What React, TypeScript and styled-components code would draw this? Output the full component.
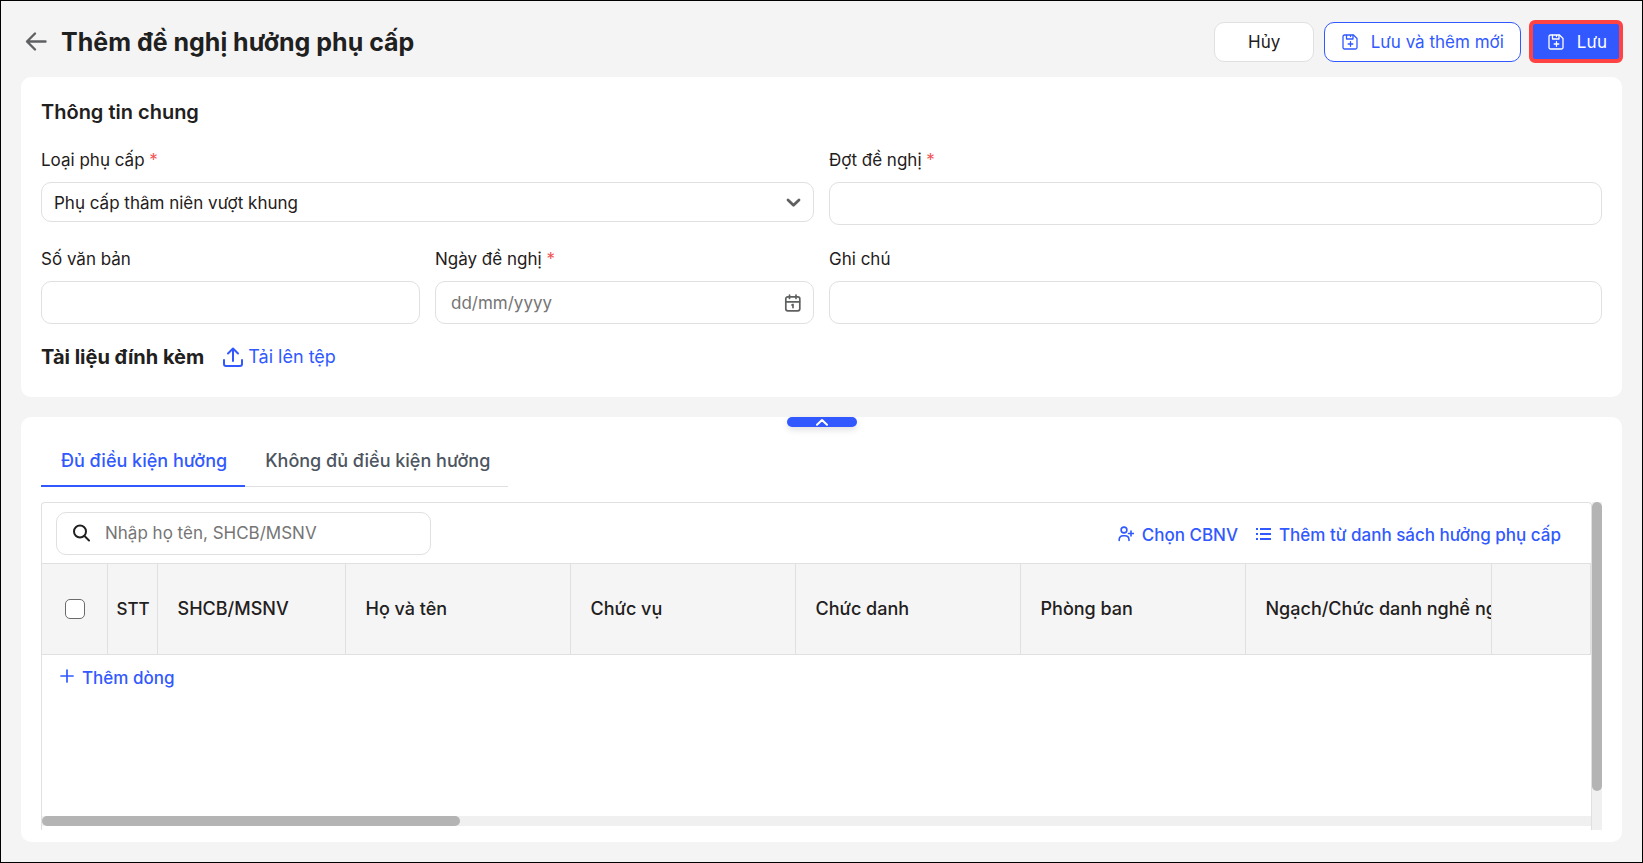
import React from 'react';
import styled, { createGlobalStyle } from 'styled-components';

const color = {
  text: '#1f2020',
  blue: '#3159ff',
  line: '#e0e0e0',
  page: '#f4f4f4',
  icon: '#5f6061',
  muted: '#757575',
  danger: '#f25555',
};

const GlobalStyle = createGlobalStyle`
  *, *::before, *::after { box-sizing: border-box; }
  body { margin: 0; background: ${color.page}; }
  body, button, input, select, table {
    font-family: Inter, "Noto Sans", sans-serif;
    font-size: 17px;
    line-height: 24px;
    color: ${color.text};
  }
  h1, h2 { margin: 0; }
`;

const Page = styled.div`
  display: flex;
  flex-direction: column;
  min-height: 100vh;
  padding: 19px 20px 20px;
  border: 1px solid #000;
  background: ${color.page};
`;

const Header = styled.header`
  display: flex;
  align-items: center;
  height: 43px;
  margin: 0 -1px 14px 0;
`;

const BackButton = styled.button`
  display: flex;
  padding: 0;
  margin: 0 14px 0 4px;
  border: 0;
  background: none;
  color: ${color.icon};
`;

const Title = styled.h1`
  flex: 1;
  font-size: 25px;
  line-height: 32px;
  font-weight: 700;
`;

const Actions = styled.div`
  display: flex;
  align-items: center;
  gap: 10px;
`;

const Button = styled.button<{ $variant: 'plain' | 'outline' }>`
  display: flex;
  align-items: center;
  justify-content: center;
  gap: 13px;
  min-width: 100px;
  height: 40px;
  padding: 0 16px 0 17px;
  border: 1px solid ${(p) => (p.$variant === 'outline' ? color.blue : color.line)};
  border-radius: 10px;
  background: #fff;
  color: ${(p) => (p.$variant === 'outline' ? color.blue : color.text)};
`;

const SaveButton = styled.button`
  display: flex;
  align-items: center;
  gap: 13px;
  height: 43px;
  margin-left: -2px;
  padding: 0 12px 0 15px;
  border: 4px solid #ff4242;
  border-radius: 6px;
  background: ${color.blue};
  color: #fff;
`;

const Card = styled.section`
  padding: 20px;
  border-radius: 10px;
  background: #fff;
`;

const InfoCard = styled(Card)`
  padding: 19px 20px 24px;
  margin-bottom: 20px;
`;

const SectionTitle = styled.h2`
  font-size: 20px;
  line-height: 32px;
  font-weight: 600;
`;

const FieldGrid = styled.div`
  display: grid;
  grid-template-columns: repeat(4, 1fr);
  column-gap: 15px;
  row-gap: 22px;
  margin-top: 20px;
`;

const Field = styled.div<{ $span?: number }>`
  display: flex;
  flex-direction: column;
  gap: 9px;
  grid-column: span ${(p) => p.$span ?? 1};
`;

const Label = styled.label`
  line-height: 25px;
`;

const Required = styled.span`
  color: ${color.danger};
`;

const TextInput = styled.input`
  display: block;
  width: 100%;
  height: 43px;
  padding: 0 15px;
  border: 1px solid ${color.line};
  border-radius: 10px;
  background: #fff;
  outline: 0;
  &::placeholder { color: ${color.muted}; opacity: 1; }
`;

const Control = styled.div`
  position: relative;
`;

const Select = styled.select`
  display: block;
  appearance: none;
  width: 100%;
  height: 40px;
  padding: 1px 40px 0 12px;
  border: 1px solid ${color.line};
  border-radius: 10px;
  background: #fff;
`;

const TrailingIcon = styled.span`
  position: absolute;
  top: 0;
  bottom: 0;
  right: 12px;
  display: flex;
  align-items: center;
  color: ${color.icon};
  pointer-events: none;
`;

const LeadingIcon = styled(TrailingIcon)`
  right: auto;
  left: 16px;
  color: ${color.text};
`;

const Attachments = styled.div`
  display: flex;
  align-items: center;
  gap: 19px;
  margin-top: 17px;
`;

const AttachTitle = styled(SectionTitle)`
  font-weight: 700;
`;

const LinkButton = styled.button`
  display: inline-flex;
  align-items: center;
  gap: 8px;
  padding: 0;
  border: 0;
  background: none;
  color: ${color.blue};
  font-weight: 500;
`;

const UploadButton = styled(LinkButton)`
  gap: 5px;
  font-size: 18px;
  font-weight: 400;
`;

const ListCard = styled(Card)`
  display: flex;
  flex: 1;
  flex-direction: column;
  position: relative;
  padding: 20px 20px 12px;
`;

const CollapseHandle = styled.button`
  position: absolute;
  top: 0;
  left: 50%;
  transform: translateX(-50%);
  display: flex;
  align-items: center;
  justify-content: center;
  width: 70px;
  height: 10px;
  padding: 0;
  border: 0;
  border-radius: 5px;
  background: ${color.blue};
  color: #fff;
  box-shadow: 0 3px 6px rgba(0, 0, 0, 0.12);
`;

const Tabs = styled.div`
  display: flex;
  align-self: flex-start;
  margin-bottom: 15px;
  box-shadow: inset 0 -1px 0 ${color.line};
`;

const Tab = styled.button<{ $active?: boolean }>`
  height: 50px;
  padding: 0 18px 0 20px;
  border: 0;
  border-bottom: 2px solid ${(p) => (p.$active ? color.blue : 'transparent')};
  background: none;
  color: ${(p) => (p.$active ? color.blue : '#4d5560')};
  font-size: 18px;
  font-weight: 500;
`;

const Scroller = styled.div`
  display: flex;
  flex: 1;
`;

const GridPanel = styled.div`
  display: flex;
  flex: 1;
  flex-direction: column;
  min-width: 0;
  padding-bottom: 4px;
  border: 1px solid ${color.line};
  border-bottom: 0;
  border-radius: 4px 4px 0 0;
`;

const Toolbar = styled.div`
  display: flex;
  align-items: center;
  justify-content: space-between;
  height: 60px;
  padding: 0 30px 0 14px;
`;

const SearchBox = styled(Control)`
  width: 375px;
`;

const SearchInput = styled(TextInput)`
  padding-left: 48px;
`;

const ToolbarLinks = styled.div`
  display: flex;
  gap: 18px;
  padding-top: 4px;

  svg { margin-bottom: 3px; }
`;

const Table = styled.table`
  width: 100%;
  table-layout: fixed;
  border-collapse: collapse;
`;

const HeadCell = styled.th<{ $width?: number; $center?: boolean }>`
  width: ${(p) => (p.$width ? `${p.$width}px` : 'auto')};
  height: 91px;
  padding: 0 0 0 ${(p) => (p.$center ? 2 : 20)}px;
  overflow: hidden;
  border: solid ${color.line};
  border-width: 1px 1px 1px 0;
  background: #f5f5f5;
  font-size: 18px;
  font-weight: 500;
  text-align: ${(p) => (p.$center ? 'center' : 'left')};
  white-space: nowrap;
`;

const IndexCell = styled(HeadCell)`
  font-size: 17px;
`;

const Checkbox = styled.input`
  appearance: none;
  display: block;
  width: 20px;
  height: 20px;
  margin: 0 auto;
  border: 1px solid #6b6b6b;
  border-radius: 5px;
  background: #fff;
`;

const AddCell = styled.td`
  padding: 10px 0 0 18px;

  svg { margin-bottom: 3px; }
`;

const HTrack = styled.div`
  height: 10px;
  margin-top: auto;
  background: #f0f0f0;
`;

const HThumb = styled.div`
  width: 27%;
  height: 100%;
  border-radius: 5px;
  background: #b4b4b4;
`;

const VTrack = styled.div`
  width: 10px;
  background: #f0f0f0;
`;

const VThumb = styled.div`
  width: 100%;
  height: 88%;
  border-radius: 5px;
  background: #b4b4b4;
`;

const stroke = {
  fill: 'none',
  stroke: 'currentColor',
  strokeLinecap: 'round' as const,
  strokeLinejoin: 'round' as const,
  'aria-hidden': true,
};

const ArrowIcon = () => (
  <svg width="22" height="22" viewBox="0 0 22 22" {...stroke} strokeWidth="2.4">
    <path d="M20.500 10.500H2.500M10 2.500L2 10.500l8 8" />
  </svg>
);

const SaveIcon = () => (
  <svg width="16" height="16" viewBox="0 0 16 16" {...stroke} strokeWidth="1.3">
    <path d="M2.500 1H11.500L15 4.500V13.500a1.500 1.500 0 0 1-1.500 1.500h-11A1.500 1.500 0 0 1 1 13.500V2.500A1.500 1.500 0 0 1 2.500 1Z" />
    <path d="M4.500 1.200V5H11V1.200M8.500 1.500v1M8.500 7.700v4.600M6.200 10h4.600" />
  </svg>
);

const ChevronIcon = () => (
  <svg width="16" height="16" viewBox="0 0 16 16" {...stroke} strokeWidth="2.8">
    <path d="M2 6L7.500 11.200l5.500-5.200" />
  </svg>
);

const HandleIcon = () => (
  <svg width="12" height="8" viewBox="0 0 12 8" {...stroke} strokeWidth="2">
    <path d="M1 6.800L6 2l5 4.800" />
  </svg>
);

const CalendarIcon = () => (
  <svg width="18" height="18" viewBox="0 0 18 18" {...stroke} strokeWidth="1.700">
    <rect x="1.800" y="2.800" width="14" height="14" rx="2" />
    <path d="M2 7.800h13.500M5.500 1v3.500M12 1v3.500M8 11l1-.6v3.200" />
  </svg>
);

const UploadIcon = () => (
  <svg width="20" height="20" viewBox="0 0 20 20" {...stroke} strokeWidth="2">
    <path d="M10 14V1.500M5 6.500l5-5 5 5M1 13v4a2 2 0 0 0 2 2h14a2 2 0 0 0 2-2v-4" />
  </svg>
);

const SearchIcon = () => (
  <svg width="18" height="18" viewBox="0 0 18 18" {...stroke} strokeWidth="2">
    <circle cx="8" cy="7.500" r="6" />
    <path d="M12.500 12l4.500 4.500" />
  </svg>
);

const UserPlusIcon = () => (
  <svg width="16" height="16" viewBox="0 0 16 16" {...stroke} strokeWidth="1.600">
    <circle cx="6" cy="4" r="2.900" />
    <path d="M1.200 14.500v-1A4 4 0 0 1 5 9.800h2a4 4 0 0 1 4 3.700v1M13 5v5M10.500 7.500h5" />
  </svg>
);

const ListIcon = () => (
  <svg width="15" height="16" viewBox="0 0 15 16" {...stroke} strokeLinecap="butt" strokeWidth="1.800">
    <path d="M4 3h11M4 8h11M4 13h11M0 3h2M0 8h2M0 13h2" />
  </svg>
);

const PlusIcon = () => (
  <svg width="14" height="14" viewBox="0 0 14 14" {...stroke} strokeWidth="1.700">
    <path d="M7 1v12M1 7h12" />
  </svg>
);

const columns = [
  { title: 'SHCB/MSNV', width: 188 },
  { title: 'Họ và tên', width: 225 },
  { title: 'Chức vụ', width: 225 },
  { title: 'Chức danh', width: 225 },
  { title: 'Phòng ban', width: 225 },
  { title: 'Ngạch/Chức danh nghề nghiệp', width: 246 },
];

export default function App() {
  return (
    <>
      <GlobalStyle />
      <Page>
        <Header>
          <BackButton type="button" aria-label="Quay lại">
            <ArrowIcon />
          </BackButton>
          <Title>Thêm đề nghị hưởng phụ cấp</Title>
          <Actions>
            <Button type="button" $variant="plain">Hủy</Button>
            <Button type="button" $variant="outline">
              <SaveIcon />
              Lưu và thêm mới
            </Button>
            <SaveButton type="submit">
              <SaveIcon />
              Lưu
            </SaveButton>
          </Actions>
        </Header>

        <InfoCard>
          <SectionTitle>Thông tin chung</SectionTitle>
          <FieldGrid>
            <Field $span={2}>
              <Label htmlFor="type">Loại phụ cấp <Required>*</Required></Label>
              <Control>
                <Select id="type">
                  <option>Phụ cấp thâm niên vượt khung</option>
                </Select>
                <TrailingIcon><ChevronIcon /></TrailingIcon>
              </Control>
            </Field>
            <Field $span={2}>
              <Label htmlFor="batch">Đợt đề nghị <Required>*</Required></Label>
              <TextInput id="batch" />
            </Field>
            <Field>
              <Label htmlFor="number">Số văn bản</Label>
              <TextInput id="number" />
            </Field>
            <Field>
              <Label htmlFor="date">Ngày đề nghị <Required>*</Required></Label>
              <Control>
                <TextInput id="date" placeholder="dd/mm/yyyy" />
                <TrailingIcon><CalendarIcon /></TrailingIcon>
              </Control>
            </Field>
            <Field $span={2}>
              <Label htmlFor="note">Ghi chú</Label>
              <TextInput id="note" />
            </Field>
          </FieldGrid>
          <Attachments>
            <AttachTitle>Tài liệu đính kèm</AttachTitle>
            <UploadButton type="button">
              <UploadIcon />
              Tải lên tệp
            </UploadButton>
          </Attachments>
        </InfoCard>

        <ListCard>
          <CollapseHandle type="button" aria-label="Thu gọn">
            <HandleIcon />
          </CollapseHandle>
          <Tabs role="tablist">
            <Tab type="button" role="tab" aria-selected="true" $active>Đủ điều kiện hưởng</Tab>
            <Tab type="button" role="tab" aria-selected="false">Không đủ điều kiện hưởng</Tab>
          </Tabs>
          <Scroller>
            <GridPanel>
              <Toolbar>
                <SearchBox>
                  <LeadingIcon><SearchIcon /></LeadingIcon>
                  <SearchInput aria-label="Tìm kiếm" placeholder="Nhập họ tên, SHCB/MSNV" />
                </SearchBox>
                <ToolbarLinks>
                  <LinkButton type="button"><UserPlusIcon />Chọn CBNV</LinkButton>
                  <LinkButton type="button"><ListIcon />Thêm từ danh sách hưởng phụ cấp</LinkButton>
                </ToolbarLinks>
              </Toolbar>
              <Table>
                <thead>
                  <tr>
                    <HeadCell $width={65} $center>
                      <Checkbox type="checkbox" aria-label="Chọn tất cả" />
                    </HeadCell>
                    <IndexCell $width={50} $center>STT</IndexCell>
                    {columns.map((c) => (
                      <HeadCell key={c.title} $width={c.width}>{c.title}</HeadCell>
                    ))}
                    <HeadCell />
                  </tr>
                </thead>
                <tbody>
                  <tr>
                    <AddCell colSpan={9}>
                      <LinkButton type="button"><PlusIcon />Thêm dòng</LinkButton>
                    </AddCell>
                  </tr>
                </tbody>
              </Table>
              <HTrack><HThumb /></HTrack>
            </GridPanel>
            <VTrack><VThumb /></VTrack>
          </Scroller>
        </ListCard>
      </Page>
    </>
  );
}
